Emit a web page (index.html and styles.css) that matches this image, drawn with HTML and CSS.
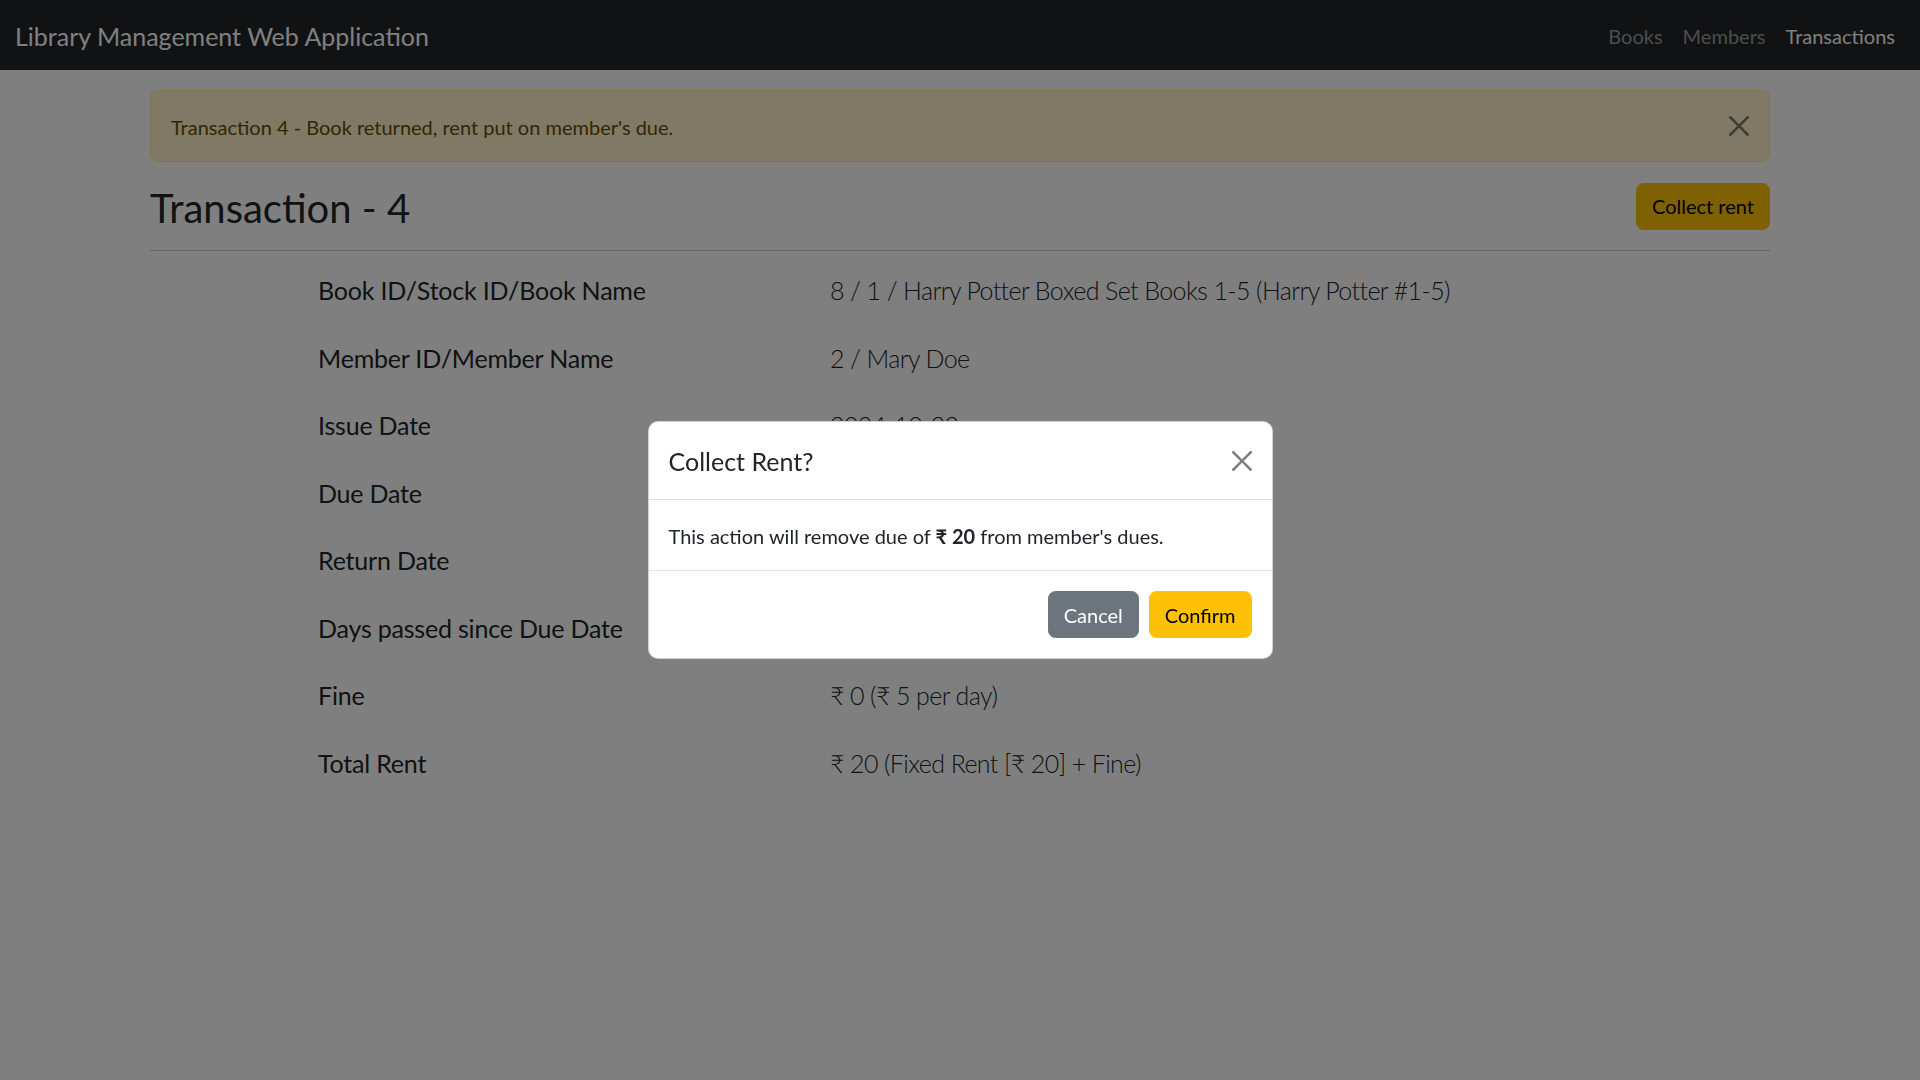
FILE: index.html
```html
<!DOCTYPE html>
<html lang="en">
<head>
<meta charset="utf-8">
<title>Transaction - 4</title>
<link rel="stylesheet" href="styles.css">
</head>
<body>
<nav class="navbar">
  <a class="brand" href="#">Library Management Web Application</a>
  <ul class="nav">
    <li><a class="nav-link" href="#">Books</a></li>
    <li><a class="nav-link" href="#">Members</a></li>
    <li><a class="nav-link active" href="#">Transactions</a></li>
  </ul>
</nav>

<main class="container">
  <div class="alert">
    <span>Transaction 4 - Book returned, rent put on member's due.</span>
    <button class="btn-close alert-close" aria-label="Close">
      <svg viewBox="0 0 16 16"><path d="M.293.293a1 1 0 0 1 1.414 0L8 6.586 14.293.293a1 1 0 1 1 1.414 1.414L9.414 8l6.293 6.293a1 1 0 0 1-1.414 1.414L8 9.414l-6.293 6.293a1 1 0 0 1-1.414-1.414L6.586 8 .293 1.707a1 1 0 0 1 0-1.414z"/></svg>
    </button>
  </div>

  <div class="page-head">
    <h2 class="page-title">Transaction - 4</h2>
    <button class="btn btn-warning">Collect rent</button>
  </div>
  <hr class="divider">

  <dl class="details">
    <div class="detail-row"><dt>Book ID/Stock ID/Book Name</dt><dd>8 / 1 / Harry Potter Boxed Set Books 1-5 (Harry Potter #1-5)</dd></div>
    <div class="detail-row"><dt>Member ID/Member Name</dt><dd>2 / Mary Doe</dd></div>
    <div class="detail-row"><dt>Issue Date</dt><dd>2024-10-22</dd></div>
    <div class="detail-row"><dt>Due Date</dt><dd>2024-10-29</dd></div>
    <div class="detail-row"><dt>Return Date</dt><dd>2024-10-24</dd></div>
    <div class="detail-row"><dt>Days passed since Due Date</dt><dd>0</dd></div>
    <div class="detail-row"><dt>Fine</dt><dd>₹ 0 (₹ 5 per day)</dd></div>
    <div class="detail-row"><dt>Total Rent</dt><dd>₹ 20 (Fixed Rent [₹ 20] + Fine)</dd></div>
  </dl>
</main>

<div class="backdrop"></div>
<div class="modal">
  <div class="modal-content">
    <div class="modal-header">
      <h5 class="modal-title">Collect Rent?</h5>
      <button class="btn-close modal-close" aria-label="Close">
        <svg viewBox="0 0 16 16"><path d="M.293.293a1 1 0 0 1 1.414 0L8 6.586 14.293.293a1 1 0 1 1 1.414 1.414L9.414 8l6.293 6.293a1 1 0 0 1-1.414 1.414L8 9.414l-6.293 6.293a1 1 0 0 1-1.414-1.414L6.586 8 .293 1.707a1 1 0 0 1 0-1.414z"/></svg>
      </button>
    </div>
    <div class="modal-body">This action will remove due of <strong>₹ 20</strong> from member's dues.</div>
    <div class="modal-footer">
      <button class="btn btn-secondary">Cancel</button>
      <button class="btn btn-warning">Confirm</button>
    </div>
  </div>
</div>
</body>
</html>
```

FILE: styles.css
```css
* { box-sizing: border-box; }

html, body { margin: 0; padding: 0; }

body {
  font-family: Lato, "Noto Sans", "DejaVu Sans", sans-serif;
  font-size: 20px;
  line-height: 1.5;
  color: #212529;
  background: #fff;
  min-height: 1080px;
}

/* navbar */
.navbar {
  height: 70px;
  background: #212529;
  display: flex;
  align-items: center;
  justify-content: space-between;
  padding: 0 15px;
}
.brand {
  font-size: 25px;
  line-height: 37.5px;
  padding-top: 4px;
  color: #fff;
  text-decoration: none;
}
.nav {
  display: flex;
  list-style: none;
  margin: 0;
  padding: 0;
}
.nav-link {
  display: block;
  padding: 12px 10px 10px;
  font-size: 20px;
  line-height: 30px;
  color: rgba(255, 255, 255, .55);
  text-decoration: none;
}
.nav-link.active { color: #fff; }

/* container */
.container {
  width: 1650px;
  margin: 0 auto;
  padding: 20px 15px 0;
}

/* alert */
.alert {
  position: relative;
  background: #fff3cd;
  border: 1px solid #ffe69c;
  color: #664d03;
  border-radius: 7.5px;
  padding: 21px 60px 19px 20px;
  margin-bottom: 20px;
  line-height: 30px;
}
.btn-close {
  background: transparent;
  border: 0;
  padding: 0;
  cursor: pointer;
  opacity: .5;
  display: flex;
  align-items: center;
  justify-content: center;
}
.btn-close svg { width: 20px; height: 20px; fill: #000; display: block; }
.alert-close {
  position: absolute;
  top: 0;
  right: 0;
  width: 60px;
  height: 70px;
}

/* page head */
.page-head {
  display: flex;
  align-items: center;
  justify-content: space-between;
}
.page-title {
  margin: 0;
  padding-top: 4px;
  font-size: 40px;
  line-height: 44px;
  font-weight: 400;
}
.divider {
  margin: 20px 0;
  border: 0;
  border-top: 1px solid rgba(33, 37, 41, .25);
}

/* buttons */
.btn {
  font-family: inherit;
  font-size: 20px;
  line-height: 30px;
  padding: 7.5px 15px;
  border: 1px solid transparent;
  border-radius: 7.5px;
  cursor: pointer;
}
.btn-warning { background: #ffc107; border-color: #ffc107; color: #000; }
.btn-secondary { background: #6c757d; border-color: #6c757d; color: #fff; }

/* details */
.details {
  margin: 0;
  padding: 1px 0 0 168px;
}
.detail-row {
  display: grid;
  grid-template-columns: 512px 1fr;
  margin-bottom: 30px;
  font-size: 25px;
  line-height: 37.5px;
}
.detail-row dt { font-weight: 400; letter-spacing: -0.2px; }
.detail-row dd { margin: 0; font-weight: 300; letter-spacing: -0.6px; }

/* modal */
.backdrop {
  position: fixed;
  inset: 0;
  background: rgba(0, 0, 0, .5);
}
.modal {
  position: fixed;
  inset: 0;
  display: flex;
  align-items: center;
  justify-content: center;
}
.modal-content {
  width: 625px;
  background: #fff;
  border: 1px solid rgba(0, 0, 0, .175);
  border-radius: 10px;
}
.modal-header {
  display: flex;
  align-items: center;
  padding: 20px;
  border-bottom: 1px solid #dee2e6;
}
.modal-title {
  margin: 0;
  padding-top: 2px;
  font-size: 25px;
  line-height: 35.5px;
  font-weight: 400;
}
.modal-close {
  margin: -10px -10px -10px auto;
  width: 40px;
  height: 40px;
}
.modal-body {
  padding: 21px 20px 19px;
  line-height: 30px;
}
.modal-body strong { font-weight: 700; }
.modal-footer {
  display: flex;
  justify-content: flex-end;
  padding: 15px;
  border-top: 1px solid #dee2e6;
}
.modal-footer .btn { margin: 5px; }
```
